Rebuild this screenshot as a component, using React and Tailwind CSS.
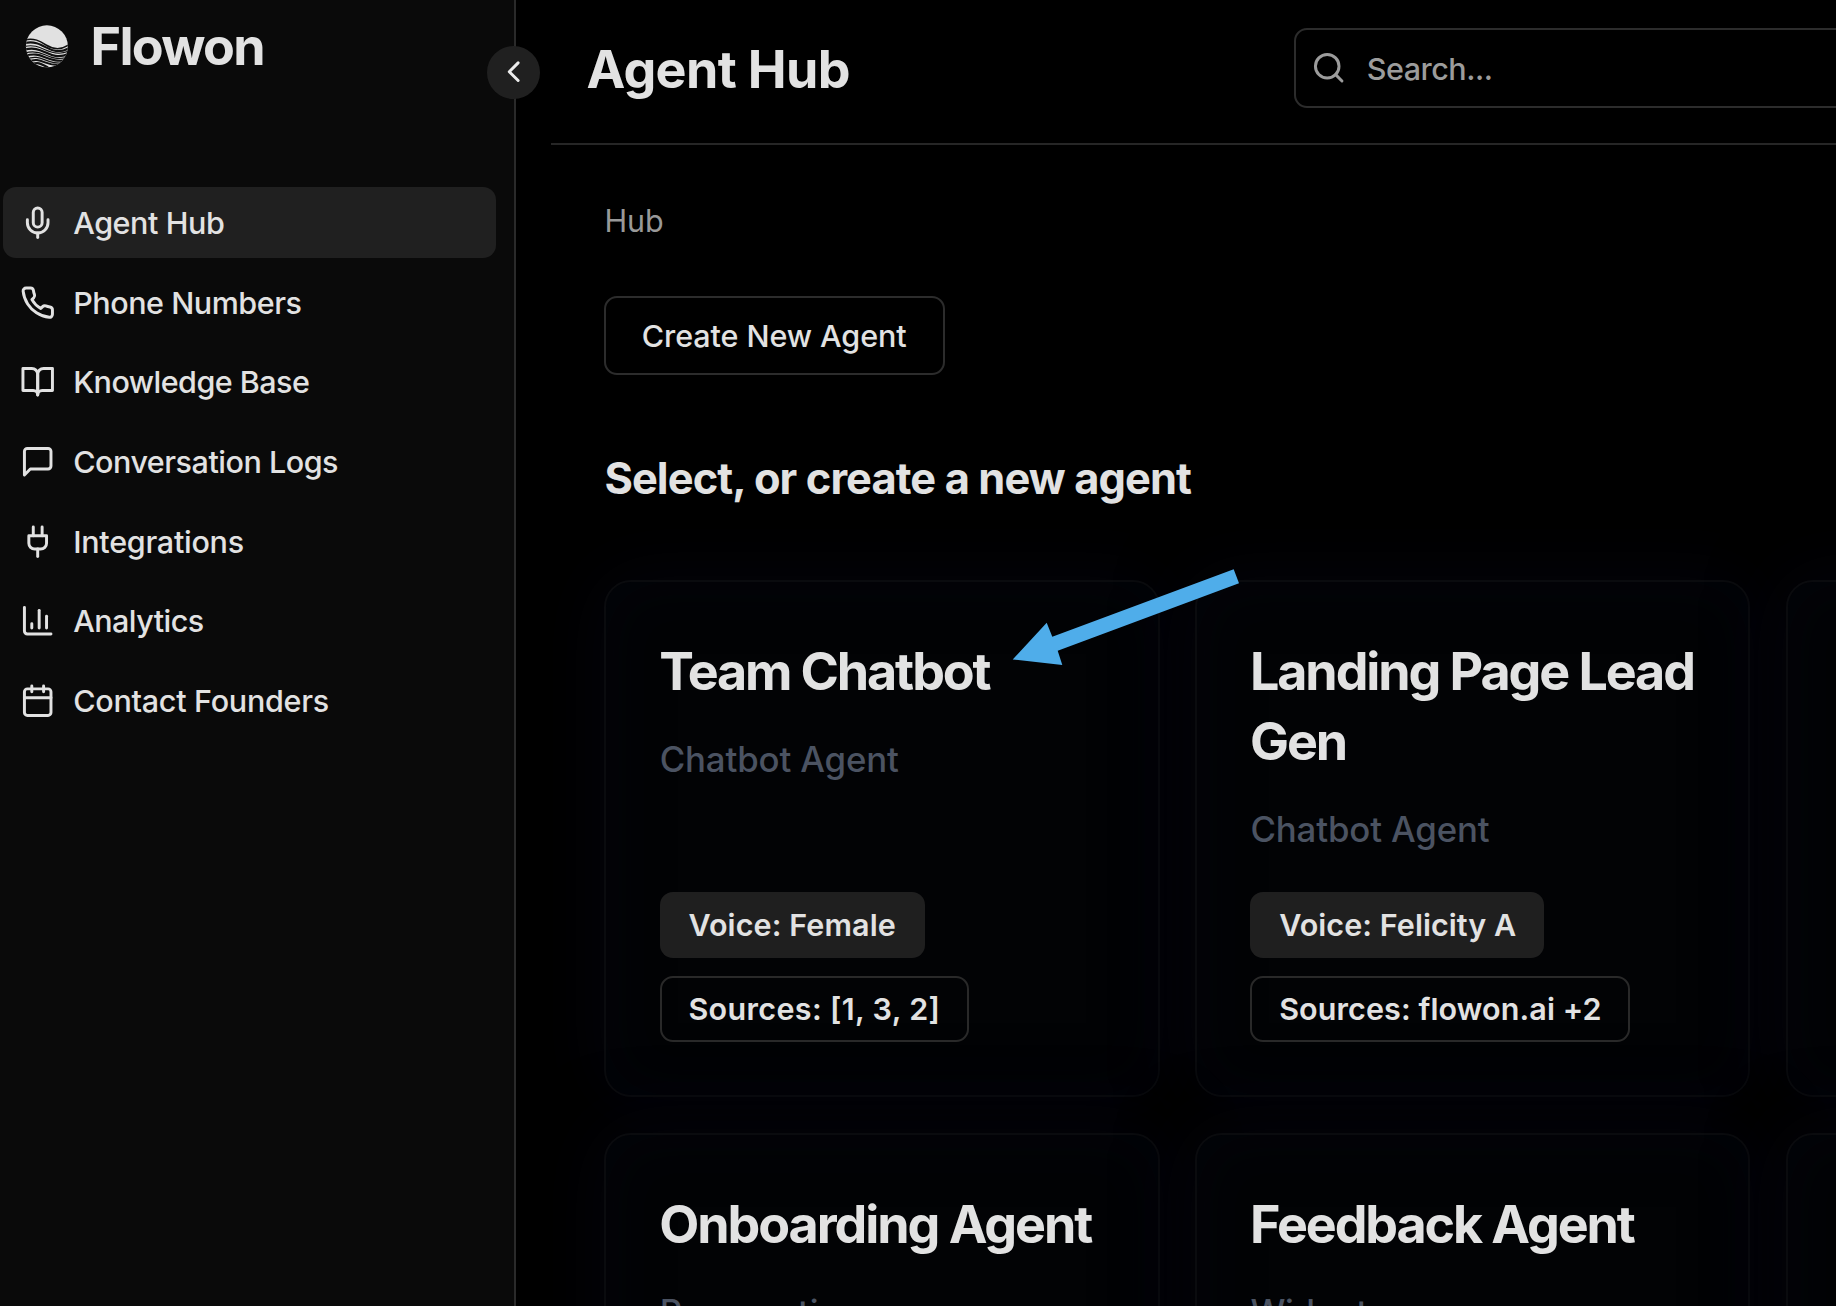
import React from "react";

function Icon({ children, className = "size-[35.4px]" }) {
  return (
    <svg
      viewBox="0 0 24 24"
      fill="none"
      stroke="currentColor"
      strokeWidth="2"
      strokeLinecap="round"
      strokeLinejoin="round"
      className={`${className} shrink-0`}
    >
      {children}
    </svg>
  );
}

const icons = {
  mic: (
    <>
      <path d="M12 2a3 3 0 0 0-3 3v7a3 3 0 0 0 6 0V5a3 3 0 0 0-3-3Z" />
      <path d="M19 10v2a7 7 0 0 1-14 0v-2" />
      <path d="M12 19v3" />
    </>
  ),
  phone: (
    <path d="M22 16.92v3a2 2 0 0 1-2.18 2 19.79 19.79 0 0 1-8.63-3.07 19.5 19.5 0 0 1-6-6 19.79 19.79 0 0 1-3.07-8.67A2 2 0 0 1 4.11 2h3a2 2 0 0 1 2 1.72 12.84 12.84 0 0 0 .7 2.81 2 2 0 0 1-.45 2.11L8.09 9.91a16 16 0 0 0 6 6l1.27-1.27a2 2 0 0 1 2.11-.45 12.84 12.84 0 0 0 2.81.7A2 2 0 0 1 22 16.92z" />
  ),
  book: (
    <>
      <path d="M2 3h6a4 4 0 0 1 4 4v14a3 3 0 0 0-3-3H2z" />
      <path d="M22 3h-6a4 4 0 0 0-4 4v14a3 3 0 0 1 3-3h7z" />
    </>
  ),
  message: <path d="M21 15a2 2 0 0 1-2 2H7l-4 4V5a2 2 0 0 1 2-2h14a2 2 0 0 1 2 2z" />,
  plug: (
    <>
      <path d="M12 22v-5" />
      <path d="M9 8V2" />
      <path d="M15 8V2" />
      <path d="M18 8v5a4 4 0 0 1-4 4h-4a4 4 0 0 1-4-4V8Z" />
    </>
  ),
  chart: (
    <>
      <path d="M3 3v16a2 2 0 0 0 2 2h16" />
      <path d="M18 17V9" />
      <path d="M13 17V5" />
      <path d="M8 17v-3" />
    </>
  ),
  calendar: (
    <>
      <path d="M8 2v4" />
      <path d="M16 2v4" />
      <rect width="18" height="18" x="3" y="4" rx="2" />
      <path d="M3 10h18" />
    </>
  ),
};

const nav = [
  { label: "Agent Hub", icon: "mic", track: "tracking-[-0.42px]", active: true },
  { label: "Phone Numbers", icon: "phone", track: "tracking-[-0.45px]" },
  { label: "Knowledge Base", icon: "book", track: "tracking-[-0.53px]" },
  { label: "Conversation Logs", icon: "message", track: "tracking-[-0.48px]" },
  { label: "Integrations", icon: "plug", track: "tracking-[-0.26px]" },
  { label: "Analytics", icon: "chart", track: "tracking-[-0.54px]" },
  { label: "Contact Founders", icon: "calendar", track: "tracking-[-0.27px]" },
];

const agents = [
  {
    title: "Team Chatbot",
    titleTrack: "tracking-[-2.15px]",
    kind: "Chatbot Agent",
    voice: { text: "Voice: Female", box: "w-[265.5px] tracking-[0.1px]" },
    sources: { text: "Sources: [1, 3, 2]", box: "w-[309.6px] tracking-[0.36px]" },
  },
  {
    title: "Landing Page Lead Gen",
    titleTrack: "tracking-[-2.1px]",
    kind: "Chatbot Agent",
    voice: { text: "Voice: Felicity A", box: "w-[294px] tracking-[0.06px]" },
    sources: { text: "Sources: flowon.ai +2", box: "w-[379.5px] tracking-[0.1px]" },
  },
  {},
  { title: "Onboarding Agent", titleTrack: "tracking-[-2.06px]", kind: "Prospecting", kindTrack: "tracking-[0.15px]" },
  { title: "Feedback Agent", titleTrack: "tracking-[-2.1px]", kind: "Widget", kindTrack: "tracking-[-0.3px]" },
  {},
];

function Logo() {
  return (
    <svg viewBox="0 0 60 60" className="size-[60px] shrink-0">
      <defs>
        <clipPath id="disc">
          <circle cx="28.9" cy="28.3" r="21" />
        </clipPath>
      </defs>
      <g clipPath="url(#disc)" fill="none" stroke="#101010">
        <rect width="60" height="60" fill="#e1e1e1" stroke="none" />
        <path strokeWidth="1.5" d="M7 21.8C16 19.6 22 23.2 28 27S42 33 51 26.8" />
        <path strokeWidth="2.1" d="M7 25C16 23 22 26.2 28 29.4S41 35.6 51 30.2" />
        <path strokeWidth="1.1" d="M7 28.4C15 26.4 21 29 27 31.8S41 37.6 51 33" />
        <path strokeWidth="2.2" d="M7 31.4C16 29.6 21 31.4 27 34.2S40 40.4 51 35.9" />
        <path strokeWidth="1.2" d="M7 35C15 32.8 21 34 27 36.8S40 42.4 51 38.8" />
        <path strokeWidth="2.1" d="M7 38C16 35.2 21 36.8 27 39.2S40 44.4 51 41.6" />
        <path strokeWidth="1.3" d="M8 41.2C16 38 21 39.4 27 41.8S38 46 48 44.6" />
        <path strokeWidth="2.1" d="M10 43.8C17 40.8 21 42 27 44.4S36 47.6 43 47" />
        <path strokeWidth="2.3" d="M14 46.4C19 44 22 44.8 30 49.4" />
      </g>
    </svg>
  );
}

function Sidebar() {
  return (
    <aside className="relative w-[516px] shrink-0 border-r-2 border-[#2a2a2a] bg-[#0a0a0a]">
      <div className="flex h-[187.4px] items-start pl-[18px]">
        <div className="mt-[18px]">
          <Logo />
        </div>
        <div className="mt-[11px] ml-[12.6px] text-[52px] leading-[71.4px] font-bold tracking-[-1.7px]">Flowon</div>
      </div>
      <nav className="flex flex-col gap-[8.8px] pr-[18px] pl-[2.5px]">
        {nav.map((n) => (
          <a
            key={n.label}
            className={`flex h-[70.85px] items-center gap-[17.6px] rounded-[13px] pl-[17.7px] text-[30.5px] font-[450] ${n.track} ${n.active ? "bg-[#202020]" : ""}`}
          >
            <Icon>{icons[n.icon]}</Icon>
            <span>{n.label}</span>
          </a>
        ))}
      </nav>
      <button className="absolute top-[45.7px] right-[-26px] flex size-[53px] items-center justify-center rounded-full bg-[#202020] text-[#ececec]">
        <Icon>
          <path d="m15 18-6-6 6-6" />
        </Icon>
      </button>
    </aside>
  );
}

function Header() {
  return (
    <header className="ml-[35px] flex h-[145px] shrink-0 items-start border-b-2 border-[#262626] pt-[28px] pl-[35.4px]">
      <h1 className="w-[707.4px] shrink-0 pt-[1.5px] text-[52px] leading-[79.7px] font-bold tracking-[-0.64px]">Agent Hub</h1>
      <div className="flex h-[79.7px] w-[700px] shrink-0 items-center rounded-[13px] border-2 border-[#2c2c2c] pl-[15.3px] text-[30.5px] font-[450] tracking-[-0.5px] text-[#9c9c9c]">
        <Icon>
          <circle cx="11" cy="11" r="8" />
          <path d="m21 21-4.3-4.3" />
        </Icon>
        <span className="ml-[20.3px] pt-[3px]">Search...</span>
      </div>
    </header>
  );
}

function AgentCard({ agent }) {
  return (
    <article className="flex h-[517.4px] flex-col justify-between rounded-[27px] border-2 border-[#0a0b0e] bg-[#020305] p-[52.8px] shadow-[0_0_70px_4px_#04040c,inset_0_0_60px_#03040a]">
      {agent.title && (
        <div>
          <h3 className={`-mr-4 pt-[2px] pr-4 text-[52px] leading-[70.8px] font-bold ${agent.titleTrack}`}>{agent.title}</h3>
          <p className={`mt-[25.2px] ml-[0.5px] text-[34.8px] leading-[53.1px] font-[450] text-[#4b5362] ${agent.kindTrack || "tracking-[-0.15px]"}`}>
            {agent.kind}
          </p>
        </div>
      )}
      {agent.voice && (
        <div className="flex flex-col items-start gap-[17.7px] text-[30.5px] font-semibold whitespace-nowrap">
          <span className={`ml-[0.5px] flex h-[66.5px] items-center rounded-[13px] bg-[#1f1f1f] pl-[28.7px] ${agent.voice.box}`}>
            {agent.voice.text}
          </span>
          <span className={`ml-[0.5px] flex h-[66.5px] items-center rounded-[13px] border-2 border-[#292929] pl-[26.7px] ${agent.sources.box}`}>
            {agent.sources.text}
          </span>
        </div>
      )}
    </article>
  );
}

export default function App() {
  return (
    <div className="relative flex h-[1306px] w-[1836px] overflow-hidden bg-black font-['Inter',sans-serif] text-[#e2e2e2]">
      <Sidebar />
      <div className="flex min-w-0 flex-1 flex-col">
        <Header />
        <main className="pl-[88.4px]">
          <div className="mt-[53px] h-[45px] text-[30.5px] leading-[45px] text-[#999999]">Hub</div>
          <button className="mt-[53px] flex h-[79.4px] w-[340.5px] items-center rounded-[13px] border-2 border-[#2c2c2c] pl-[35.4px] text-[30.5px] font-[550] tracking-[-0.08px]">
            Create New Agent
          </button>
          <h2 className="mt-[71.6px] h-[62px] text-[43.4px] leading-[62px] font-[650] tracking-[-0.9px]">Select, or create a new agent</h2>
          <section className="mt-[70.8px] grid grid-cols-[repeat(3,555.2px)] gap-[35.6px]">
            {agents.map((a, i) => (
              <AgentCard key={i} agent={a} />
            ))}
          </section>
        </main>
      </div>
      <svg viewBox="0 0 228 98" className="pointer-events-none absolute top-[568px] left-[1012px] h-[98px] w-[228px]" fill="#4fadea">
        <path d="M.7 91.5 34.7 54.7 40.3 68.7 221.7 1.3 227 15.3 45.7 82.7 50.3 97Z" />
      </svg>
    </div>
  );
}
